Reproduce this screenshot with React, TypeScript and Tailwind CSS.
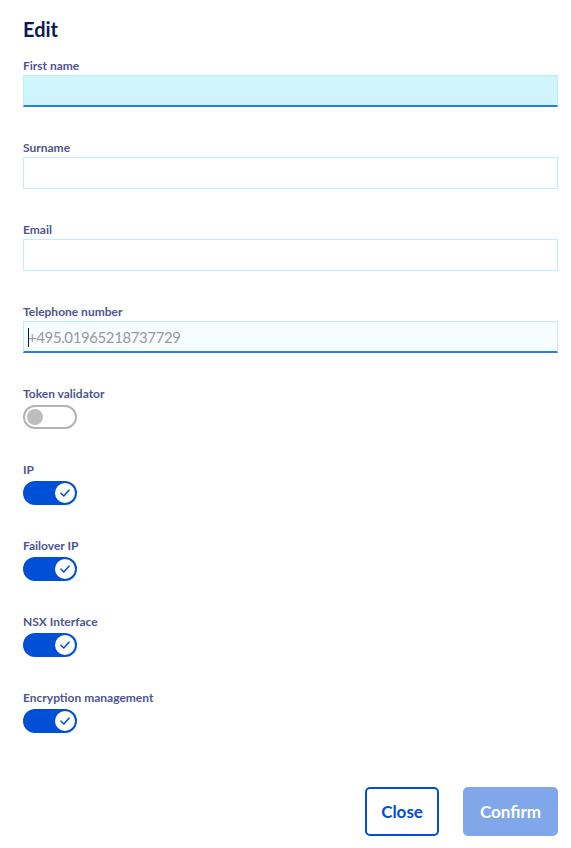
import React from 'react';

const font = { fontFamily: 'Lato, "Noto Sans", sans-serif' };

interface FieldProps {
  label: string;
  variant?: 'idle' | 'hover' | 'focus';
  placeholder?: string;
}

const TextField: React.FC<FieldProps> = ({ label, variant = 'idle', placeholder }) => {
  const box =
    variant === 'hover'
      ? 'bg-[#cff4fc] border-[#bdeefb] border-b-2 border-b-[#2b7be6]'
      : variant === 'focus'
      ? 'bg-[#f5fdff] border-[#bdeefb] border-b-2 border-b-[#2b7be6]'
      : 'bg-white border-[#bdeefb]';
  return (
    <div className="flex flex-col">
      <label className="pt-[1px] text-[12px] leading-[16px] font-bold text-[#4d5592] mb-[1px]">{label}</label>
      <div className={`relative h-[32px] border ${box}`}>
        {variant === 'focus' && (
          <span className="absolute left-[4px] top-[6px] h-[19px] w-px bg-[#1a1a3a]" />
        )}
        <input
          className="w-full h-full bg-transparent outline-none px-[4px] text-[15px] tracking-[-0.4px] text-[#333] placeholder:text-[#9a9a9a]"
          style={font}
          placeholder={placeholder}
        />
      </div>
    </div>
  );
};

const Toggle: React.FC<{ label: string; on: boolean }> = ({ label, on }) => (
  <div className="flex flex-col">
    <span className="pt-[1px] text-[12px] leading-[16px] font-bold text-[#4d5592] mb-[3px]">{label}</span>
    {on ? (
      <div className="w-[54px] h-[24px] rounded-full bg-[#0050d7] flex items-center justify-end pr-[2px]">
        <div className="w-[20px] h-[20px] rounded-full bg-white flex items-center justify-center">
          <svg width="12" height="12" viewBox="0 0 12 12" fill="none">
            <path d="M2 6.2 L4.8 9 L10 3.2" stroke="#0050d7" strokeWidth="1.6" strokeLinecap="round" strokeLinejoin="round" />
          </svg>
        </div>
      </div>
    ) : (
      <div className="w-[54px] h-[24px] rounded-full bg-white border-2 border-[#b3b3b3] flex items-center pl-[2px]">
        <div className="w-[16px] h-[16px] rounded-full bg-[#bdbdbd]" />
      </div>
    )}
  </div>
);

export default function App() {
  return (
    <div className="min-h-[848px] bg-white pl-[23px] pr-[13px] pt-[15px] pb-[12px]" style={font}>
      <h2 className="text-[20px] leading-[28px] font-bold text-[#0a1a55] mb-[14px]">Edit</h2>
      <div className="flex flex-col gap-[32px]">
        <TextField label="First name" variant="hover" />
        <TextField label="Surname" />
        <TextField label="Email" />
        <TextField label="Telephone number" variant="focus" placeholder="+495.01965218737729" />
        <Toggle label="Token validator" on={false} />
        <Toggle label="IP" on />
        <Toggle label="Failover IP" on />
        <Toggle label="NSX Interface" on />
        <Toggle label="Encryption management" on />
      </div>
      <div className="flex justify-end gap-[24px] mt-[54px]">
        <button className="h-[49px] px-[14px] rounded-[5px] border-2 border-[#0050d7] text-[#0050d7] text-[17px] font-bold bg-white">
          Close
        </button>
        <button className="h-[49px] px-[17px] rounded-[5px] bg-[#80a7ea] text-white text-[17px] font-bold">
          Confirm
        </button>
      </div>
    </div>
  );
}
